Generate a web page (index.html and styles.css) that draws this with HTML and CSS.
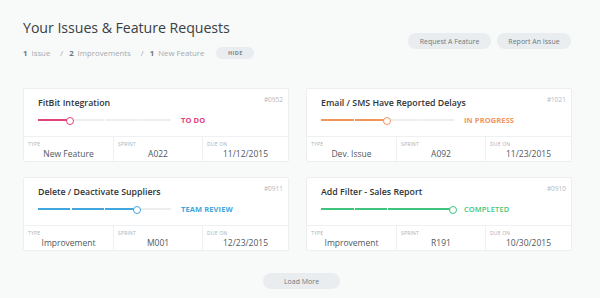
FILE: index.html
```html
<!DOCTYPE html>
<html>
<head>
<meta charset="utf-8">
<link rel="stylesheet" href="styles.css">
</head>
<body>
<div class="page">
  <header class="top">
    <div class="intro">
      <h1 class="title">Your Issues &amp; Feature Requests</h1>
      <div class="summary">
        <span><b>1</b> Issue</span>
        <span class="sep">/</span>
        <span><b>2</b> Improvements</span>
        <span class="sep">/</span>
        <span><b>1</b> New Feature</span>
        <button class="pill hide">HIDE</button>
      </div>
    </div>
    <div class="actions">
      <button class="pill action">Request A Feature</button>
      <button class="pill action">Report An Issue</button>
    </div>
  </header>

  <main class="grid">
    <article class="card todo">
      <div class="card-top">
        <div class="card-head"><h2 class="card-title">FitBit Integration</h2><span class="card-id">#0952</span></div>
        <div class="progress-row">
          <div class="track">
            <span class="seg"></span><span class="seg"></span><span class="seg"></span><span class="seg"></span>
            <span class="fill" style="width:25%"></span>
          </div>
          <span class="status">TO DO</span>
        </div>
      </div>
      <div class="meta">
        <div class="cell"><span class="label">TYPE</span><span class="value">New Feature</span></div>
        <div class="cell"><span class="label">SPRINT</span><span class="value">A022</span></div>
        <div class="cell"><span class="label">DUE ON</span><span class="value">11/12/2015</span></div>
      </div>
    </article>

    <article class="card progress">
      <div class="card-top">
        <div class="card-head"><h2 class="card-title">Email / SMS Have Reported Delays</h2><span class="card-id">#1021</span></div>
        <div class="progress-row">
          <div class="track">
            <span class="seg"></span><span class="seg"></span><span class="seg"></span><span class="seg"></span>
            <span class="fill" style="width:50%"></span>
          </div>
          <span class="status">IN PROGRESS</span>
        </div>
      </div>
      <div class="meta">
        <div class="cell"><span class="label">TYPE</span><span class="value">Dev. Issue</span></div>
        <div class="cell"><span class="label">SPRINT</span><span class="value">A092</span></div>
        <div class="cell"><span class="label">DUE ON</span><span class="value">11/23/2015</span></div>
      </div>
    </article>

    <article class="card review">
      <div class="card-top">
        <div class="card-head"><h2 class="card-title">Delete / Deactivate Suppliers</h2><span class="card-id">#0911</span></div>
        <div class="progress-row">
          <div class="track">
            <span class="seg"></span><span class="seg"></span><span class="seg"></span><span class="seg"></span>
            <span class="fill" style="width:75%"></span>
          </div>
          <span class="status">TEAM REVIEW</span>
        </div>
      </div>
      <div class="meta">
        <div class="cell"><span class="label">TYPE</span><span class="value">Improvement</span></div>
        <div class="cell"><span class="label">SPRINT</span><span class="value">M001</span></div>
        <div class="cell"><span class="label">DUE ON</span><span class="value">12/23/2015</span></div>
      </div>
    </article>

    <article class="card done">
      <div class="card-top">
        <div class="card-head"><h2 class="card-title">Add Filter - Sales Report</h2><span class="card-id">#0910</span></div>
        <div class="progress-row">
          <div class="track">
            <span class="seg"></span><span class="seg"></span><span class="seg"></span><span class="seg"></span>
            <span class="fill" style="width:100%"></span>
          </div>
          <span class="status">COMPLETED</span>
        </div>
      </div>
      <div class="meta">
        <div class="cell"><span class="label">TYPE</span><span class="value">Improvement</span></div>
        <div class="cell"><span class="label">SPRINT</span><span class="value">R191</span></div>
        <div class="cell"><span class="label">DUE ON</span><span class="value">10/30/2015</span></div>
      </div>
    </article>
  </main>

  <div class="more"><button class="pill load">Load More</button></div>
</div>
</body>
</html>
```

FILE: styles.css
```css
* { box-sizing: border-box; }
html, body { margin: 0; padding: 0; }
body {
  background: #f8f9f9;
  font-family: "Open Sans", "Liberation Sans", sans-serif;
  color: #333;
  width: 600px;
  height: 298px;
  overflow: hidden;
}
.page {
  width: 549px;
  margin-left: 23px;
  padding-top: 17px;
}
.top {
  display: flex;
  justify-content: space-between;
  align-items: flex-start;
  height: 71px;
}
.title {
  margin: 0;
  font-size: 14.2px;
  font-weight: 400;
  line-height: 22px;
  color: #3a3f44;
  letter-spacing: -0.05px;
}
.summary {
  display: flex;
  align-items: center;
  margin-top: 7px;
  font-size: 7.8px;
  color: #a4abb0;
  height: 14px;
}
.summary b { color: #6d767c; font-weight: 700; margin-right: 2px; }
.sep { margin: 0 6px 0 10px; }
.pill {
  border: 0;
  background: #e9edef;
  border-radius: 8px;
  font-family: "Open Sans", "Liberation Sans", sans-serif;
  color: #6f787e;
  padding: 0;
  cursor: pointer;
}
.hide {
  margin-left: 12px;
  width: 38px;
  height: 12px;
  font-size: 5.5px;
  font-weight: 700;
  letter-spacing: 0.4px;
  color: #7d868c;
}
.actions {
  display: flex;
  gap: 6px;
  margin-top: 16px;
  margin-right: 1px;
}
.action {
  height: 16px;
  font-size: 7px;
}
.action:first-child { width: 83px; }
.action:last-child { width: 74px; }

.grid {
  display: grid;
  grid-template-columns: 266px 266px;
  column-gap: 17px;
  row-gap: 15px;
}
.card {
  background: #fff;
  border: 1px solid #eceeef;
  border-radius: 2px;
  height: 74px;
  display: flex;
  flex-direction: column;
}
.card-top {
  height: 47px;
  padding: 6px 5px 0 14px;
}
.card-head {
  display: flex;
  justify-content: space-between;
  align-items: flex-start;
}
.card-title {
  margin: 2px 0 0 0;
  font-size: 8.8px;
  line-height: 13px;
  font-weight: 600;
  color: #2f3438;
}
.card-id {
  font-size: 6.5px;
  color: #b3b9bd;
  line-height: 9px;
}
.progress-row {
  display: flex;
  align-items: center;
  margin-top: 5px;
  height: 10px;
}
.track {
  position: relative;
  width: 133px;
  height: 2px;
  display: flex;
  gap: 1px;
}
.seg {
  flex: 1;
  background: #eceeef;
  height: 2px;
}
.fill {
  position: absolute;
  left: 0;
  top: 0;
  height: 2px;
  background: repeating-linear-gradient(90deg, var(--c) 0, var(--c) 32.5px, rgba(255,255,255,0.6) 32.5px, rgba(255,255,255,0.6) 33.5px);
}
.fill::after {
  content: "";
  position: absolute;
  right: -3px;
  top: -2px;
  width: 6px;
  height: 6px;
  border-radius: 50%;
  background: #fff;
  border: 1.6px solid var(--c);
}
.status {
  margin-left: 10px;
  font-size: 7.5px;
  font-weight: 700;
  color: var(--c);
  letter-spacing: 0.1px;
}
.done .status { font-weight: 600; }
.todo { --c: #e0437c; }
.progress { --c: #f0955c; }
.review { --c: #42a6de; }
.done { --c: #3fc47d; }

.meta {
  flex: 1;
  display: grid;
  grid-template-columns: 89px 89px 1fr;
  border-top: 1px solid #eef0f1;
}
.cell {
  display: flex;
  flex-direction: column;
  padding: 4px 0 0 4px;
}
.cell + .cell { border-left: 1px solid #eef0f1; }
.label {
  font-size: 5px;
  line-height: 7px;
  color: #aab0b4;
  letter-spacing: 0.2px;
}
.value {
  font-size: 8.5px;
  line-height: 11px;
  color: #50585e;
  text-align: center;
  margin-left: -4px;
}
.more {
  display: flex;
  justify-content: center;
  padding-top: 22px;
  padding-left: 8px;
}
.load {
  width: 77px;
  height: 16px;
  font-size: 7px;
}
```
